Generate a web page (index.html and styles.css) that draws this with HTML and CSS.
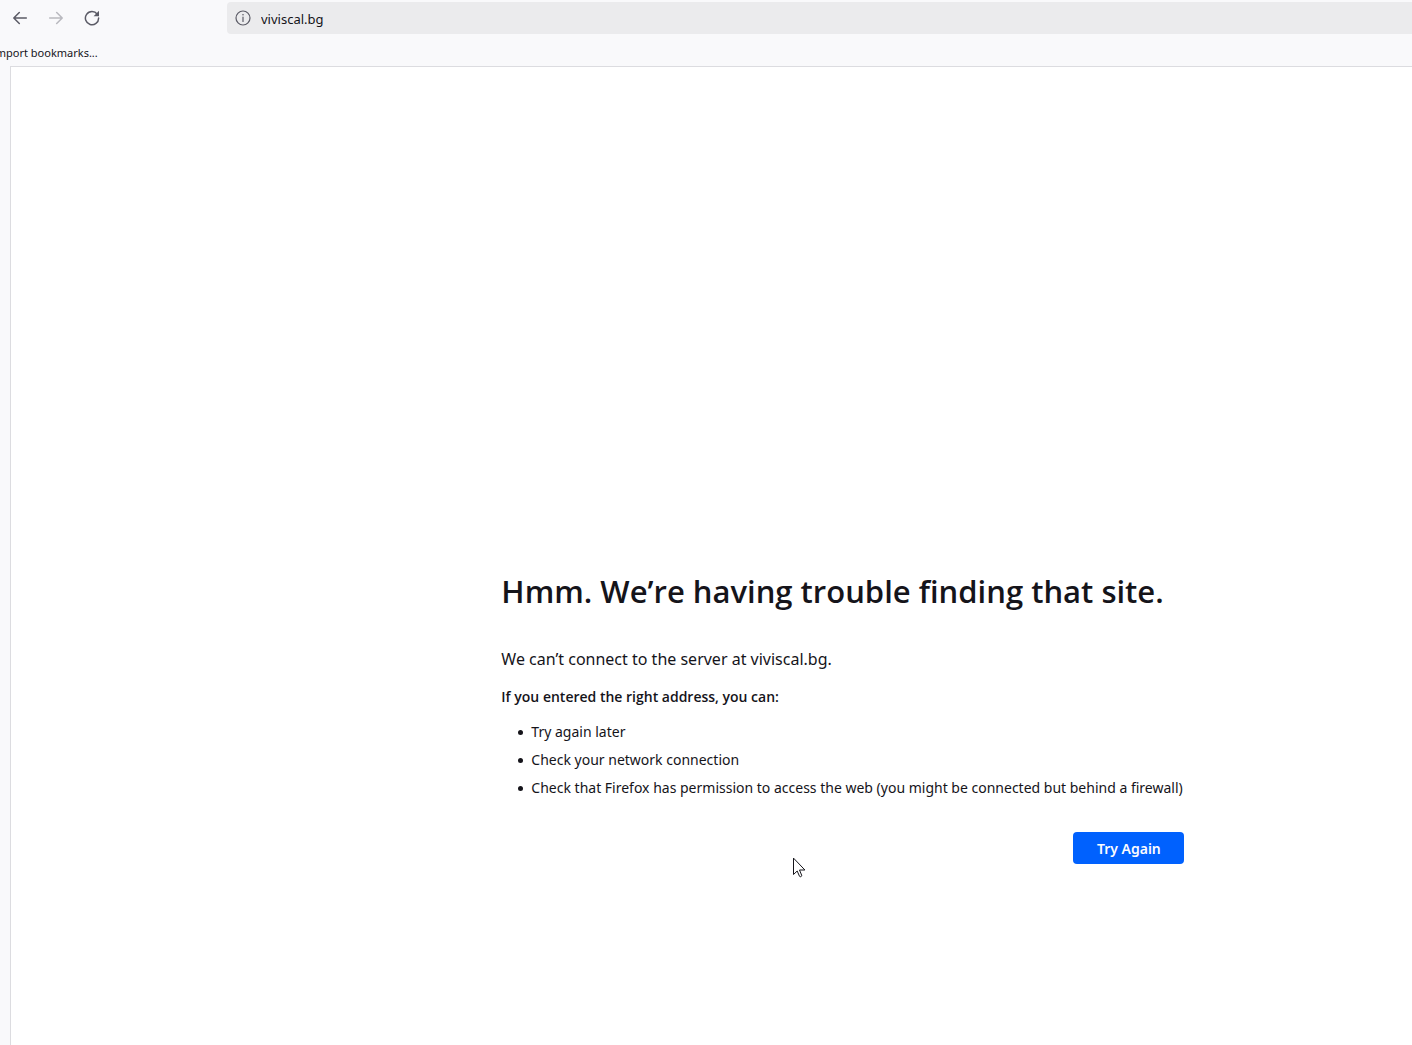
FILE: index.html
```html
<!DOCTYPE html>
<html lang="en">
<head>
  <meta charset="UTF-8">
  <meta name="viewport" content="width=device-width, initial-scale=1.0">
  <title>Server Not Found</title>
  <link rel="stylesheet" href="styles.css">
</head>
<body>

  <header class="toolbox">
    <nav class="nav-bar">
      <div class="nav-buttons">
        <button type="button" class="nav-button" aria-label="Back">
          <svg width="16" height="16" viewBox="0 0 16 16">
            <path d="M14.300 8H2M7.300 2.500L1.800 8l5.500 5.500" />
          </svg>
        </button>
        <button type="button" class="nav-button" aria-label="Forward" disabled>
          <svg width="16" height="16" viewBox="0 0 16 16">
            <path d="M1.700 8H14M8.700 2.500L14.200 8l-5.500 5.500" />
          </svg>
        </button>
        <button type="button" class="nav-button" aria-label="Reload">
          <svg width="16" height="16" viewBox="0 0 16 16">
            <path d="M13.3 4.2A6.6 6.6 0 1 0 14.6 8" />
            <path class="solid" d="M15 .8v5.4H9.6z" />
          </svg>
        </button>
      </div>
      <div class="url-bar">
        <svg class="info-icon" width="16" height="16" viewBox="0 0 16 16">
          <circle cx="8" cy="8" r="7" />
          <path d="M8 7v4.500" />
          <circle class="solid" cx="8" cy="4.800" r=".8" />
        </svg>
        <input type="text" class="url-input" aria-label="Address" value="viviscal.bg">
      </div>
    </nav>
    <div class="bookmarks-bar">
      <a href="#" class="bookmark">Import bookmarks...</a>
    </div>
  </header>

  <main class="page">
    <div class="error">
      <h1>Hmm. We’re having trouble finding that site.</h1>
      <p class="short-desc">We can’t connect to the server at viviscal.bg.</p>
      <p class="advice">If you entered the right address, you can:</p>
      <ul>
        <li>Try again later</li>
        <li>Check your network connection</li>
        <li>Check that Firefox has permission to access the web (you might be connected but behind a firewall)</li>
      </ul>
      <div class="actions">
        <button type="button" class="primary">Try Again</button>
      </div>
    </div>
  </main>

  <!-- Mouse pointer -->
  <svg class="pointer" width="12" height="20" viewBox="0 0 12 20">
    <path d="M.5.5v16l3.700-3.500 2.300 5.300c.6 1 2.500.3 2.200-1L6.500 12h5z" />
  </svg>

</body>
</html>
```
FILE: styles.css
```css
* {
  box-sizing: border-box;
}

body {
  display: flex;
  flex-direction: column;
  min-height: 100vh;
  margin: 0;
  overflow-x: hidden;
  background-color: #f9f9fb;
  color: #15141a;
  font-family: "Segoe UI", "Noto Sans", sans-serif;
  font-size: 14px;
}

/* Browser toolbars */
.nav-bar {
  display: flex;
  align-items: center;
  height: 36px;
}

.nav-buttons {
  display: flex;
  gap: 4px;
  width: 227px;
  padding-left: 4px;
}

.nav-button {
  display: flex;
  align-items: center;
  justify-content: center;
  width: 32px;
  height: 32px;
  padding: 0;
  border: none;
  border-radius: 4px;
  background: none;
}

.nav-button:disabled {
  opacity: 0.4;
}

svg {
  fill: none;
  stroke: #5b5b66;
  stroke-width: 1.5;
  stroke-linecap: round;
  stroke-linejoin: round;
}

.solid {
  fill: #5b5b66;
  stroke: none;
}

.url-bar {
  display: flex;
  flex: 1;
  align-items: center;
  gap: 10px;
  height: 32px;
  padding-left: 8px;
  border-radius: 4px 0 0 4px;
  background-color: #ebebed;
}

.info-icon {
  stroke-width: 1.2;
}

.url-input {
  flex: 1;
  padding: 2px 0 0;
  border: none;
  outline: none;
  background: none;
  color: #15141a;
  font-family: inherit;
  font-size: 13px;
}

.bookmarks-bar {
  display: flex;
  align-items: center;
  height: 30px;
  padding-top: 2px;
}

.bookmark {
  margin-left: -8px;
  color: #15141a;
  font-size: 11px;
  text-decoration: none;
}

/* Error page */
.page {
  flex: 1;
  margin-left: 10px;
  padding-top: 500px;
  border-top: 1px solid #dcdce0;
  border-left: 1px solid #dcdce0;
  background-color: #fff;
}

.error {
  max-width: 683px;
  margin-left: 35%;
}

h1 {
  margin: 0 0 32px;
  font-family: "Segoe UI", "Open Sans", sans-serif;
  font-size: 31px;
  font-weight: 600;
  line-height: 48px;
  white-space: nowrap;
}

.short-desc {
  margin: 0 0 14px;
  font-size: 16px;
  line-height: 24px;
}

.advice {
  margin: 0 0 11px;
  font-family: "Segoe UI", "Open Sans", sans-serif;
  font-weight: 600;
  line-height: 24px;
}

ul {
  margin: 0;
  padding-left: 17px;
  list-style: none;
}

li {
  display: flex;
  align-items: center;
  gap: 8px;
  margin-bottom: 4px;
  line-height: 24px;
  white-space: nowrap;
}

li::before {
  content: "";
  width: 5px;
  height: 5px;
  border-radius: 50%;
  background-color: #15141a;
}

.actions {
  display: flex;
  justify-content: flex-end;
  margin-top: 32px;
}

.primary {
  min-width: 111px;
  height: 32px;
  border: none;
  border-radius: 4px;
  background-color: #0061fe;
  color: #fbfbfe;
  font-family: inherit;
  font-size: 14px;
  font-weight: 600;
}

.pointer {
  position: absolute;
  top: 858px;
  left: 793px;
}

.pointer path {
  fill: #fff;
  stroke: #15141a;
  stroke-width: 1;
}
```
